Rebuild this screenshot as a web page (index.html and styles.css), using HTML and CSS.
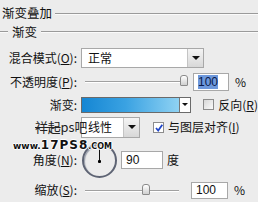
FILE: index.html
```html
<!DOCTYPE html>
<html>
<head>
<meta charset="utf-8">
<link rel="stylesheet" href="styles.css">
</head>
<body>
<div class="panel">
  <div class="title"><span>渐变叠加</span><i class="rule"></i></div>
  <div class="group-head"><i class="rule short"></i><span class="gtext">渐变</span><i class="rule"></i></div>

  <div class="row r-blend">
    <label class="lbl">混合模式(<u>O</u>):</label>
    <div class="select wide"><span class="sel-val">正常</span><span class="arrow"><i></i></span></div>
  </div>

  <div class="row r-opacity">
    <label class="lbl">不透明度(<u>P</u>):</label>
    <div class="slider s-op"><div class="track"></div><div class="thumb" style="left:99px"></div></div>
    <div class="num n-op"><span class="hl">100</span></div>
    <span class="unit">%</span>
  </div>

  <div class="row r-grad">
    <label class="lbl">渐变:</label>
    <div class="gradpick"><div class="grad"></div><span class="arrow small"><i></i></span></div>
    <span class="check"></span><span class="cklabel">反向(<u>R</u>)</span>
  </div>

  <div class="row r-style">
    <label class="lbl"></label>
    <div class="select narrow"><span class="sel-val">线性</span><span class="arrow"><i></i></span></div>
    <span class="check on"><svg viewBox="0 0 10 10" width="10" height="10"><path d="M2 5 L4.2 7.5 L8.3 1.8" fill="none" stroke="#2046c8" stroke-width="1.8"/></svg></span><span class="cklabel">与图层对齐(<u>I</u>)</span>
  </div>

  <div class="row r-angle">
    <label class="lbl">角度(<u>N</u>):</label>
    <div class="dial"><i class="needle"></i><i class="dot"></i></div>
    <div class="num n-angle">90</div>
    <span class="unit">度</span>
  </div>

  <div class="row r-scale">
    <label class="lbl">缩放(<u>S</u>):</label>
    <div class="slider s-sc"><div class="track"></div><div class="thumb" style="left:61px"></div></div>
    <div class="num n-sc">100</div>
    <span class="unit">%</span>
  </div>

  <div class="wm-label"><s>祥起</s>ps吧</div>
  <div class="wm-url">www.<b>17PS8</b><span class="com">.com</span></div>
</div>
</body>
</html>
```
FILE: styles.css
```css
html, body {
  margin: 0;
  padding: 0;
}
body {
  background: #ececec;
  font-family: "Noto Sans CJK SC", "Noto Sans", sans-serif;
  font-size: 12px;
  color: #111;
  width: 258px;
  height: 202px;
  overflow: hidden;
}
.panel {
  position: relative;
  width: 258px;
  height: 202px;
}
u { text-decoration: underline; text-underline-offset: 1px; }
.rule {
  display: block;
  flex: 1;
  height: 0;
  border-top: 1px solid #9a9a9a;
  border-bottom: 1px solid #fafafa;
}
.title {
  height: 26px;
  display: flex;
  align-items: center;
  padding-left: 2px;
  line-height: 1;
  font-size: 12.5px;
}
.title .rule { margin-left: 3px; margin-top: 1px; }
.group-head {
  height: 12px;
  display: flex;
  align-items: center;
  line-height: 1;
  font-size: 12.5px;
}
.group-head .short { flex: 0 0 8px; }
.gtext { margin: 0 4px 0 4px; }

.row {
  display: flex;
  align-items: center;
}
.lbl {
  flex: 0 0 77px;
  text-align: right;
  margin-right: 4px;
  white-space: nowrap;
  line-height: 1;
}
.r-blend { margin-top: 10px; height: 20px; }
.r-opacity { margin-top: 5px; height: 18px; }
.r-grad { margin-top: 5px; height: 17px; }
.r-style { margin-top: 4px; height: 20px; }
.r-angle { margin-top: 5px; height: 36px; }
.r-scale { margin-top: 3px; height: 18px; }

.select {
  display: flex;
  height: 20px;
  box-sizing: border-box;
  border: 1px solid #a8a8a8;
  background: #fff;
}
.select.wide { width: 123px; }
.select.narrow { width: 59px; height: 21px; }
.sel-val {
  flex: 1;
  padding-left: 6px;
  line-height: 18px;
}
.arrow {
  flex: 0 0 15px;
  background: linear-gradient(#f4f4f4, #d8d8d8);
  border-left: 1px solid #c4c4c4;
  display: flex;
  align-items: center;
  justify-content: center;
}
.arrow i {
  display: block;
  width: 0;
  height: 0;
  border-left: 4px solid transparent;
  border-right: 4px solid transparent;
  border-top: 4px solid #111;
}
.arrow.small { flex-basis: 10px; background: #fff; border-left: 1px solid #777; }
.arrow.small i { border-left-width: 3px; border-right-width: 3px; border-top-width: 3px; }

.slider {
  position: relative;
  height: 14px;
}
.s-op { width: 108px; margin-right: 4px; }
.s-sc { width: 102px; margin-right: 8px; margin-top: 2px; }
.track {
  position: absolute;
  left: 4px;
  right: 4px;
  top: 6px;
  height: 0;
  border-top: 1px solid #a0a0a0;
  border-bottom: 1px solid #fff;
}
.thumb {
  position: absolute;
  top: 0;
  width: 8px;
  height: 11px;
  box-sizing: border-box;
  border: 1px solid #8a8a8a;
  border-radius: 3px 3px 1px 1px;
  background: linear-gradient(#ffffff, #cfcfcf);
}

.num {
  box-sizing: border-box;
  height: 18px;
  border: 1px solid #a8a8a8;
  background: #fff;
  padding-left: 4px;
  line-height: 16px;
  font-family: "Liberation Sans", Arial, sans-serif;
  font-size: 12px;
}
.n-op { width: 36px; }
.n-sc { width: 37px; height: 17px; line-height: 15px; }
.n-angle { width: 42px; margin-left: 4px; }
.hl { background: #6d98dc; color: #0a1a4a; }
.unit { margin-left: 6px; line-height: 1; }
.n-angle + .unit { margin-left: 4px; }

.gradpick {
  display: flex;
  width: 121px;
  height: 16px;
  box-sizing: border-box;
  border: 1px solid #6a6a6a;
  background: #fff;
}
.grad {
  flex: 1;
  background: linear-gradient(90deg, #1586d3 0%, #3aa2e2 45%, #8fd2f3 100%);
}
.check {
  display: inline-block;
  flex: 0 0 11px;
  width: 11px;
  height: 11px;
  box-sizing: border-box;
  border: 1px solid #8c8c8c;
  background: linear-gradient(135deg, #d8d8d8, #fafafa);
  margin-left: 12px;
}
.check.on { background: #fff; margin-left: 13px; }
.check svg { display: block; }
.cklabel { margin-left: 4px; white-space: nowrap; line-height: 1; }

.dial {
  position: relative;
  flex: 0 0 35px;
  width: 35px;
  height: 35px;
  box-sizing: border-box;
  border: 2px solid #5e6474;
  border-radius: 50%;
  background: #ececec;
  box-shadow: inset 1px 1px 1px #9aa0ac;
  margin-left: 1px;
}
.needle {
  position: absolute;
  left: 15px;
  top: 0;
  width: 1px;
  height: 16px;
  background: #111;
}
.dot {
  position: absolute;
  left: 14px;
  top: 15px;
  width: 3px;
  height: 3px;
  background: #000;
  border-radius: 1px;
}

.wm-label {
  position: absolute;
  left: 35px;
  top: 118px;
  font-size: 12.8px;
  line-height: 18px;
  color: #222;
}
.wm-label s { text-decoration-thickness: 1px; }
.wm-url {
  position: absolute;
  left: 13px;
  top: 139px;
  font-family: "DejaVu Sans", sans-serif;
  font-weight: 900;
  font-size: 9px;
  line-height: 12px;
  color: #111;
  text-shadow: 1px 0 #fff, -1px 0 #fff, 0 1px #fff, 0 -1px #fff;
}
.wm-url b { font-size: 12px; letter-spacing: 1px; }
.wm-url .com { font-size: 8px; text-transform: uppercase; }
```
